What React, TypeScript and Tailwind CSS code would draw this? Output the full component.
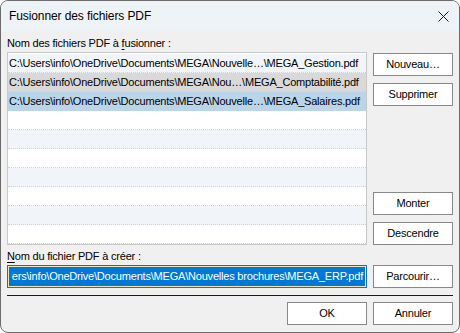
import React from 'react';

const FONT = { fontFamily: '"Liberation Sans", Arial, sans-serif' };

const FILES = [
  'C:\\Users\\info\\OneDrive\\Documents\\MEGA\\Nouvelle…\\MEGA_Gestion.pdf',
  'C:\\Users\\info\\OneDrive\\Documents\\MEGA\\Nou…\\MEGA_Comptabilité.pdf',
  'C:\\Users\\info\\OneDrive\\Documents\\MEGA\\Nouvelle…\\MEGA_Salaires.pdf',
];

function Button({ children }: { children: React.ReactNode }) {
  return (
    <button className="flex h-[23px] w-[80px] items-center justify-center border border-[#888888] bg-white text-[11px] tracking-[-0.2px] text-black">
      {children}
    </button>
  );
}

export default function App() {
  const rows = Array.from({ length: 10 }, (_, i) => i);

  return (
    <div style={FONT} className="h-[333px] w-[460px] bg-white">
      <div className="flex h-[333px] w-[460px] flex-col overflow-hidden rounded-[8px] border border-[#6b6b6b] bg-[#f0f0f0]">
        {/* Title bar */}
        <div className="flex h-[30px] items-center justify-between bg-[#eef3f8] pl-[8px] pr-[10px]">
          <span className="text-[12px] tracking-[-0.1px] text-black">Fusionner des fichiers PDF</span>
          <svg width="11" height="11" viewBox="0 0 11 11">
            <path d="M0.5 0.5L10.5 10.5M10.5 0.5L0.5 10.5" stroke="#1a1a1a" strokeWidth="1" />
          </svg>
        </div>

        {/* Content */}
        <div className="flex flex-1 flex-col px-[6px] text-[11px] tracking-[-0.2px] text-black">
          <div className="h-[21px] pt-[5px] leading-[15px]">
            Nom des fichiers PDF à <u className="underline-offset-2">f</u>usionner :
          </div>

          <div className="flex gap-[6px]">
            <div className="h-[193px] w-[360px] overflow-hidden border border-[#c8c8c8] bg-white pt-[1px]">
              {rows.map((i) => {
                let bg = i % 2 === 0 ? 'bg-[#f1f5fa]' : 'bg-white';
                if (i === 1) bg = 'bg-[#d9d9d9]';
                if (i === 2) bg = 'bg-[#bad4ea]';
                return (
                  <div
                    key={i}
                    className={`flex h-[19px] items-center overflow-hidden whitespace-nowrap border-b border-dotted border-[#d2d2d2] pl-[1px] ${bg}`}
                  >
                    {FILES[i] ?? ''}
                  </div>
                );
              })}
            </div>

            <div className="flex flex-col justify-between pt-[1px]">
              <div className="flex flex-col gap-[7px]">
                <Button>Nouveau…</Button>
                <Button>Supprimer</Button>
              </div>
              <div className="flex flex-col gap-[7px]">
                <Button>Monter</Button>
                <Button>Descendre</Button>
              </div>
            </div>
          </div>

          <div className="h-[20px] pt-[4px] leading-[15px]">
            <u className="underline-offset-2">N</u>om du fichier PDF à créer :
          </div>

          <div className="flex gap-[6px]">
            <div className="h-[23px] w-[360px] border border-[#0078d7] bg-[#f3e4b6] p-[1px]">
              <div className="flex h-full items-center justify-end overflow-hidden whitespace-nowrap bg-[#0078d7] pr-[2px] text-white">
                ers\info\OneDrive\Documents\MEGA\Nouvelles brochures\MEGA_ERP.pdf
              </div>
            </div>
            <Button>Parcourir…</Button>
          </div>

          <div className="mt-[7px] h-px w-[446px] bg-[#1a1a1a]" />

          <div className="mt-[6px] flex justify-end gap-[6px]">
            <Button>OK</Button>
            <Button>Annuler</Button>
          </div>
        </div>
      </div>
    </div>
  );
}
